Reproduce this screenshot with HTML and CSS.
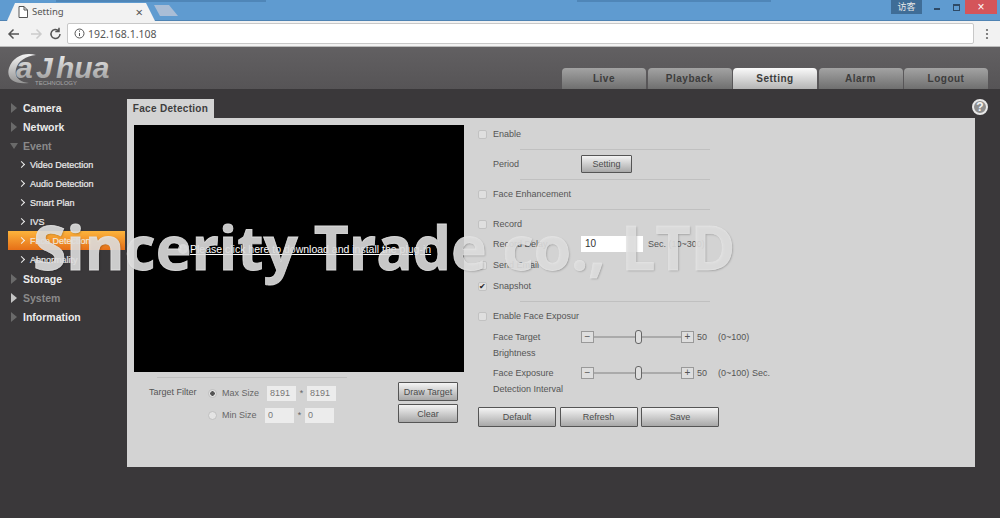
FILE: index.html
```html
<!DOCTYPE html>
<html>
<head>
 <meta charset="utf-8">
 <title>Setting</title>
 <link rel="stylesheet" href="styles.css">
</head>
<body>
<div class="tabstrip">
   <div class="browsertab">
      <svg class="pageicon" width="10" height="12" viewBox="0 0 10 12"><path d="M1 .5h5l3.500 3.500v7.500h-8.500zM6 .5v3.500h3.500" fill="#fff" stroke="#555"/></svg>
      <span class="tabtitle">Setting</span>
      <span class="tabclose">×</span>
   </div>
   <div class="newtab"></div>
   <div class="shade shade1"></div>
   <div class="shade shade2"></div>
   <div class="wincontrols">
      <span class="visitor">访客</span>
      <span class="winmin"></span>
      <span class="winmax"></span>
      <span class="winclose">×</span>
   </div>
</div>
<div class="toolbar">
   <svg class="navicons" width="56" height="14" viewBox="0 0 56 14" fill="none">
      <path d="M12 7H2M6.500 2.500 2 7l4.500 4.500" stroke="#555" stroke-width="1.500"/>
      <path d="M24 7h10M29.500 2.500 34 7l-4.500 4.500" stroke="#ccc" stroke-width="1.500"/>
      <path d="M53 7a4.500 4.500 0 1 1-1.300-3.200M52 .8v3.700h-3.700" stroke="#555" stroke-width="1.500"/>
   </svg>
   <div class="omnibox">
      <svg width="11" height="11" viewBox="0 0 11 11" fill="none"><circle cx="5.500" cy="5.500" r="4.500" stroke="#555"/><path d="M5.500 5v3M5.500 2.500v1.200" stroke="#555"/></svg>
      <span class="url">192.168.1.108</span>
   </div>
   <svg class="menudots" width="4" height="12" viewBox="0 0 4 12"><circle cx="2" cy="2" r="1.100" fill="#666"/><circle cx="2" cy="6" r="1.100" fill="#666"/><circle cx="2" cy="10" r="1.100" fill="#666"/></svg>
</div>
<div class="header">
   <svg class="logo" width="106" height="39" viewBox="0 0 106 39">
      <defs><linearGradient id="logofill" x1="0" y1="0" x2="0" y2="1"><stop offset="0" stop-color="#f4f4f4"/><stop offset="1" stop-color="#949494"/></linearGradient></defs>
      <path d="M28 5C17 2 5 6 1 18c-3 10 4 17 20 15-9-1-15-5-13-14C10 11 18 6 28 5z" fill="url(#logofill)"/>
      <text x="8" y="28" class="logotext" fill="url(#logofill)">a</text>
      <text x="28" y="28" class="logotext" fill="url(#logofill)">J</text>
      <text x="48" y="28" class="logotext" fill="url(#logofill)">hua</text>
      <text x="27" y="35" class="logosub">TECHNOLOGY</text>
   </svg>
   <div class="mainnav">
      <div class="navtab">Live</div>
      <div class="navtab">Playback</div>
      <div class="navtab active">Setting</div>
      <div class="navtab">Alarm</div>
      <div class="navtab">Logout</div>
   </div>
</div>
<div class="page">
   <div class="sidebar">
      <div class="group"><span class="arrow"></span>Camera</div>
      <div class="group"><span class="arrow"></span>Network</div>
      <div class="group dim"><span class="arrow down"></span>Event</div>
      <div class="sub"><span class="chev"></span>Video Detection</div>
      <div class="sub"><span class="chev"></span>Audio Detection</div>
      <div class="sub"><span class="chev"></span>Smart Plan</div>
      <div class="sub"><span class="chev"></span>IVS</div>
      <div class="sub current"><span class="chev"></span>Face Detection</div>
      <div class="sub"><span class="chev"></span>Abnormality</div>
      <div class="group"><span class="arrow"></span>Storage</div>
      <div class="group dim"><span class="arrow bright"></span>System</div>
      <div class="group"><span class="arrow"></span>Information</div>
   </div>
   <div class="content">
      <div class="contenthead">
         <div class="panetab">Face Detection</div>
         <div class="help">?</div>
      </div>
      <div class="panel">
         <div class="leftcol">
            <div class="video">
               <svg class="plugicon" width="10" height="10" viewBox="0 0 10 10"><circle cx="5" cy="5" r="5" fill="#bbb"/><path d="M2 5h6M5 2v6" stroke="#777"/></svg>
               <a class="pluglink">Please click here to download and install the plug-in</a>
            </div>
            <hr class="line lineleft">
            <div class="filter">
               <div class="filterlabel">Target Filter</div>
               <div class="filterrows">
                  <div class="filterrow">
                     <span class="radio on"></span><span class="sizelabel">Max Size</span>
                     <span class="sizebox">8191</span><span class="star">*</span><span class="sizebox">8191</span>
                  </div>
                  <div class="filterrow">
                     <span class="radio"></span><span class="sizelabel short">Min Size</span>
                     <span class="sizebox">0</span><span class="star">*</span><span class="sizebox">0</span>
                  </div>
               </div>
               <div class="filterbtns">
                  <button class="btn btnsmall">Draw Target</button>
                  <button class="btn btnsmall">Clear</button>
               </div>
            </div>
         </div>
         <div class="rightcol">
            <div class="row"><span class="check"></span>Enable</div>
            <hr class="line">
            <div class="row"><span class="fieldname">Period</span><button class="btn btnset">Setting</button></div>
            <hr class="line">
            <div class="row"><span class="check"></span>Face Enhancement</div>
            <hr class="line">
            <div class="row"><span class="check"></span>Record</div>
            <div class="row delayrow"><span class="fieldname">Record Delay</span><span class="textbox">10</span><span class="unit">Sec. (10~300)</span></div>
            <div class="row tight"><span class="check"></span>Send Email</div>
            <div class="row tight"><span class="check on">✔</span>Snapshot</div>
            <hr class="line">
            <div class="row"><span class="check"></span>Enable Face Exposur</div>
            <div class="slider">
               <div class="fieldname">Face Target<br>Brightness</div>
               <span class="stepper">−</span><span class="track"><span class="thumb"></span></span><span class="stepper">+</span>
               <span class="sliderval">50</span><span class="range">(0~100)</span>
            </div>
            <div class="slider">
               <div class="fieldname">Face Exposure<br>Detection Interval</div>
               <span class="stepper">−</span><span class="track"><span class="thumb"></span></span><span class="stepper">+</span>
               <span class="sliderval">50</span><span class="range">(0~100)</span><span class="sec">Sec.</span>
            </div>
            <div class="actions">
               <button class="btn btnwide">Default</button>
               <button class="btn btnwide">Refresh</button>
               <button class="btn btnwide">Save</button>
            </div>
         </div>
      </div>
   </div>
</div>
<div class="watermark">Sincerity Trade co., LTD</div>
</body>
</html>
```

FILE: styles.css
```css
* {
  box-sizing: border-box;
}
html, body {
  margin: 0;
  height: 518px;
  overflow: hidden;
}
body {
  position: relative;
  background: #3a383a;
  font-family: "Liberation Sans", Arial, sans-serif;
  font-size: 9px;
  color: #555;
}

/* browser top */
.tabstrip {
  position: relative;
  display: flex;
  height: 21px;
  background: #5f9bd0;
  border-bottom: 1px solid #4f83b3;
}
.browsertab {
  display: flex;
  align-items: center;
  width: 148px;
  height: 21px;
  margin-left: 7px;
  padding: 2px 0 0 11px;
  background: #f2f2f2;
  clip-path: polygon(0 100%, 8px 3px, 139px 3px, 148px 100%);
  color: #555;
  font-size: 9.500px;
  font-family: "Noto Sans", sans-serif;
}
.tabtitle {
  margin-left: 4px;
}
.tabclose {
  margin-left: 72px;
  font-size: 13px;
}
.newtab {
  width: 24px;
  height: 11px;
  margin: 5px 0 0 -1px;
  background: #a9bdd6;
  clip-path: polygon(0 0, 15px 0, 24px 100%, 6px 100%);
}
.shade {
  position: absolute;
  top: 0;
  height: 2px;
  background: #4f86b8;
}
.shade1 {
  left: 56px;
  width: 210px;
}
.shade2 {
  left: 577px;
  width: 194px;
}
.wincontrols {
  display: flex;
  margin-left: auto;
  padding-right: 3px;
  height: 14px;
}
.visitor {
  width: 31px;
  background: #3f6d97;
  color: #e8e8e8;
  font: 9px/14px "Noto Sans CJK SC", sans-serif;
  text-align: center;
}
.winmin {
  width: 6px;
  height: 2px;
  margin: 8px 0 0 12px;
  background: #2e4a66;
}
.winmax {
  width: 7px;
  height: 7px;
  margin: 4px 0 0 13px;
  border: 1px solid #2e4a66;
  border-top-width: 2px;
}
.winclose {
  width: 32px;
  margin-left: 5px;
  background: #d4555a;
  color: #fff;
  font-size: 12px;
  line-height: 14px;
  text-align: center;
}
.toolbar {
  display: flex;
  align-items: center;
  height: 26px;
  padding-left: 7px;
  background: #f2f2f2;
  border-bottom: 1px solid #bcbcbc;
}
.omnibox {
  display: flex;
  align-items: center;
  width: 907px;
  height: 21px;
  margin-left: 4px;
  padding-left: 6px;
  background: #fff;
  border: 1px solid #c8c8c8;
  border-radius: 2px;
}
.url {
  margin-left: 3px;
  font: 10.500px "Noto Sans", sans-serif;
  color: #555;
}
.menudots {
  margin-left: 11px;
}

/* device header */
.header {
  display: flex;
  justify-content: space-between;
  height: 42px;
  padding: 0 12px 0 8px;
  background: linear-gradient(#626062, #565456);
}
.logo {
  margin-top: 3px;
}
.logotext {
  font: italic bold 30px "Liberation Sans", sans-serif;
}
.logosub {
  font: 6px "Liberation Sans", sans-serif;
  fill: #a8a8a8;
}
.mainnav {
  display: flex;
  gap: 1.500px;
  align-items: flex-end;
}
.navtab {
  width: 84px;
  height: 21px;
  background: linear-gradient(#a3a3a3, #6f6f6f);
  border-radius: 4px 4px 0 0;
  color: #3c3c3c;
  font-size: 10px;
  font-weight: bold;
  letter-spacing: .5px;
  line-height: 21px;
  text-align: center;
}
.navtab.active {
  background: linear-gradient(#fafafa, #b4b4b4);
}

/* left menu */
.page {
  display: flex;
}
.sidebar {
  width: 127px;
  padding: 9px 0 0 8px;
}
.group, .sub {
  display: flex;
  align-items: center;
  height: 19px;
  color: #ececec;
}
.group {
  font-size: 10.500px;
  font-weight: bold;
}
.dim {
  color: #8a8a8a;
}
.arrow {
  width: 0;
  height: 0;
  margin: 0 6px 0 3px;
  border-left: 6px solid #6a6a6a;
  border-top: 5px solid transparent;
  border-bottom: 5px solid transparent;
}
.arrow.down {
  margin-left: 2px;
  margin-right: 5px;
  border-top: 6px solid #6a6a6a;
  border-left: 4px solid transparent;
  border-right: 4px solid transparent;
  border-bottom: 0;
  width: 8px;
}
.arrow.bright {
  border-left-color: #c4c4c4;
}
.sub {
  font-size: 9px;
  -webkit-text-stroke: .2px #ececec;
}
.chev {
  width: 5px;
  height: 5px;
  margin: 0 6px 0 11px;
  border-top: 1px solid #eee;
  border-right: 1px solid #eee;
  transform: rotate(45deg);
}
.current {
  width: 117px;
  background: linear-gradient(#fcb43c, #e66f17);
  color: #f5e3c8;
}

/* main pane */
.content {
  width: 848px;
}
.contenthead {
  display: flex;
  justify-content: space-between;
  align-items: flex-end;
  height: 29px;
}
.panetab {
  width: 87px;
  height: 19px;
  background: #d3d3d3;
  color: #3d3d3d;
  font-size: 10px;
  font-weight: bold;
  letter-spacing: .3px;
  line-height: 19px;
  text-align: center;
}
.help {
  width: 16px;
  height: 16px;
  margin: 0 -13px 3px 0;
  background: #8e8e8e;
  border: 2px solid #e8e8e8;
  border-radius: 50%;
  color: #f4f4f4;
  font-size: 12px;
  font-weight: bold;
  line-height: 12px;
  text-align: center;
}
.panel {
  display: flex;
  gap: 14px;
  height: 349px;
  padding: 7px 0 0 7px;
  background: #d3d3d3;
}
.leftcol {
  width: 330px;
}
.video {
  display: flex;
  align-items: center;
  height: 247px;
  padding-left: 44px;
  background: #000;
}
.plugicon {
  margin-right: 2px;
}
.pluglink {
  color: #fff;
  font-size: 10.500px;
  text-decoration: underline;
}
.line {
  width: 190px;
  height: 1px;
  margin: 6px 0 5px 42px;
  background: #c0c0c0;
  border: 0;
}
.lineleft {
  margin: 5px 0 4px 23px;
}
.filter {
  display: flex;
  padding-left: 15px;
}
.filterlabel {
  width: 57px;
  margin-top: 5px;
  color: #555;
}
.filterrow {
  display: flex;
  align-items: center;
  height: 22px;
  color: #666;
}
.radio {
  width: 9px;
  height: 9px;
  margin: 0 5px 0 2px;
  background: #e4e4e4;
  border: 1px solid #c0c0c0;
  border-radius: 50%;
}
.radio.on {
  background: radial-gradient(circle, #555 0 2px, #e4e4e4 2.500px);
}
.sizelabel {
  width: 45px;
}
.sizelabel.short {
  width: 43px;
}
.sizebox {
  width: 29px;
  height: 15px;
  padding-left: 3px;
  background: #ececec;
  color: #777;
  line-height: 15px;
}
.star {
  width: 11px;
  text-align: center;
}
.filterbtns {
  display: flex;
  flex-direction: column;
  gap: 3px;
  margin-left: auto;
  margin-right: 6px;
}
.btn {
  background: linear-gradient(#f4f4f4, #a8a8a8);
  border: 1px solid #555;
  border-radius: 1px;
  color: #4c4c4c;
  font-family: "Liberation Sans", Arial, sans-serif;
  font-size: 9px;
  padding: 0;
}
.btnsmall {
  width: 60px;
  height: 19px;
}
.btnset {
  width: 51px;
  height: 18px;
}
.btnwide {
  width: 78px;
  height: 20px;
}
.rightcol {
  width: 330px;
}
.row {
  display: flex;
  align-items: center;
  height: 18px;
}
.row.delayrow {
  height: 19px;
  margin-top: 1px;
}
.row.tight {
  margin-top: 3px;
}
.check {
  width: 9px;
  height: 9px;
  margin-right: 6px;
  background: #dfdfdf;
  border: 1px solid #c2c2c2;
  border-radius: 2px;
  color: #222;
  font-size: 8px;
  line-height: 7px;
}
.fieldname {
  flex: none;
  width: 88px;
  margin-left: 15px;
}
.textbox {
  width: 62px;
  height: 16px;
  padding-left: 4px;
  background: #fff;
  color: #333;
  font-size: 10px;
  line-height: 16px;
}
.unit {
  margin-left: 5px;
}
.slider {
  display: flex;
  align-items: flex-start;
  margin-top: 4px;
  height: 32px;
  line-height: 16px;
}
.stepper {
  width: 13px;
  height: 12px;
  margin-top: 2px;
  background: #dedede;
  border: 1px solid #999;
  font-size: 10px;
  line-height: 10px;
  text-align: center;
}
.track {
  position: relative;
  width: 87px;
  height: 2px;
  margin-top: 7px;
  background: #aaa;
}
.thumb {
  position: absolute;
  left: 41px;
  top: -6px;
  width: 7px;
  height: 14px;
  background: #dedede;
  border: 1px solid #666;
  border-radius: 3px;
}
.sliderval {
  margin-left: 3px;
  width: 21px;
}
.range {
  width: 34px;
}
.actions {
  display: flex;
  gap: 3.500px;
  margin-top: 10px;
}

/* stamped over the picture */
.watermark {
  position: absolute;
  left: 33px;
  top: 207px;
  color: rgba(226, 226, 226, .88);
  font-family: "Open Sans", sans-serif;
  font-size: 60.500px;
  font-weight: bold;
  line-height: 80px;
  white-space: nowrap;
  -webkit-text-stroke: .8px rgba(226, 226, 226, .88);
  text-shadow: 1px 1px 2px rgba(0, 0, 0, .25);
}
```
